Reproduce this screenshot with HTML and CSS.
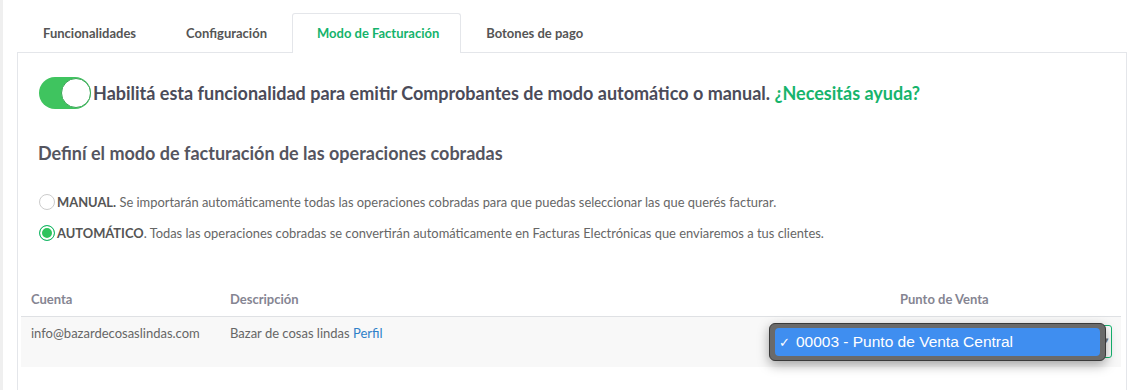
FILE: index.html
```html
<!DOCTYPE html>
<html lang="es">
  <head>
    <meta charset="UTF-8" />
    <meta name="viewport" content="width=device-width, initial-scale=1.0" />
    <title>Modo de Facturación</title>
    <link rel="stylesheet" href="styles.css">
  </head>

  <body>
    <div class="page">
      <ul class="tabs">
        <li class="tab">Funcionalidades</li>
        <li class="tab">Configuración</li>
        <li class="tab active">Modo de Facturación</li>
        <li class="tab">Botones de pago</li>
      </ul>

      <div class="panel">
        <div class="intro">
          <span class="toggle"><span class="knob"></span></span>
          <p class="intro-text">
            Habilitá esta funcionalidad para emitir Comprobantes de modo automático o manual.
            <a class="help" href="#">¿Necesitás ayuda?</a>
          </p>
        </div>

        <h3 class="section-title">Definí el modo de facturación de las operaciones cobradas</h3>

        <div class="options">
          <label class="option">
            <span class="radio"></span>
            <span><b>MANUAL.</b> Se importarán automáticamente todas las operaciones cobradas para que puedas seleccionar las que querés facturar.</span>
          </label>
          <label class="option">
            <span class="radio checked"></span>
            <span><b>AUTOMÁTICO</b>. Todas las operaciones cobradas se convertirán automáticamente en Facturas Electrónicas que enviaremos a tus clientes.</span>
          </label>
        </div>

        <div class="accounts">
          <div class="row head">
            <div class="cell">Cuenta</div>
            <div class="cell">Descripción</div>
            <div class="cell pos-head">Punto de Venta</div>
          </div>
          <div class="row body">
            <div class="cell">info@bazardecosaslindas.com</div>
            <div class="cell">Bazar de cosas lindas <a class="link" href="#">Perfil</a></div>
            <div class="cell">
              <div class="select">
                <span class="caret">▾</span>
                <div class="popup">
                  <div class="popup-item"><span class="check">✓</span>00003 - Punto de Venta Central</div>
                </div>
              </div>
            </div>
          </div>
        </div>
      </div>
    </div>
  </body>
</html>
```

FILE: styles.css
```css
body {
  margin: 0;
  font-family: "Lato", "Open Sans", sans-serif;
  background-color: #fff;
  color: #666;
}

.page {
  border-left: 3px solid #efefef;
  padding: 13px 14px 0 14px;
  min-height: 377px;
}

.tabs {
  list-style: none;
  display: flex;
  margin: 0 0 -1px 1px;
  padding: 0;
}

.tab {
  height: 38px;
  line-height: 39px;
  padding: 0 24px;
  font-size: 13px;
  font-weight: bold;
  color: #555;
  border: 1px solid transparent;
  border-bottom: none;
}

.tab.active {
  color: #14b36b;
  background-color: #fff;
  border-color: #e4e6ea;
  border-radius: 3px 3px 0 0;
  position: relative;
  z-index: 1;
  height: 39px;
  padding-right: 21px;
}

.panel {
  border: 1px solid #e4e6ea;
  border-bottom: none;
  padding: 24px 5px 30px 3px;
}

.intro {
  display: flex;
  align-items: center;
  padding-left: 18px;
}

.toggle {
  display: flex;
  justify-content: flex-end;
  width: 52px;
  height: 32px;
  border-radius: 16px;
  background-color: #3fc45f;
  flex-shrink: 0;
}

.knob {
  width: 30px;
  height: 30px;
  margin-top: 1px;
  border-radius: 50%;
  background-color: #fff;
  box-sizing: border-box;
  border: 1px solid #3aa656;
}

.intro-text {
  margin: 0 0 0 2px;
  font-size: 18px;
  font-weight: bold;
  color: #4b4b59;
}

.help {
  color: #16b46c;
  text-decoration: none;
}

.section-title {
  margin: 33px 0 0 17px;
  font-size: 18px;
  font-weight: bold;
  color: #55555f;
}

.options {
  margin: 29px 0 0 18px;
  display: flex;
  flex-direction: column;
  gap: 13px;
}

.option {
  display: flex;
  align-items: center;
  font-size: 12.9px;
  color: #666;
  height: 18px;
}

.option b {
  color: #555;
}

.radio {
  width: 16px;
  height: 16px;
  box-sizing: border-box;
  border-radius: 50%;
  border: 1px solid #ccc;
  background-color: #fff;
  margin-right: 2px;
}

.radio.checked {
  border: 1px solid #1ab76a;
  background-color: #2ec35c;
  box-shadow: inset 0 0 0 2px #fff;
}

.accounts {
  margin-top: 44px;
}

.row {
  display: grid;
  grid-template-columns: 199px 530px 1fr;
}

.head {
  font-size: 13px;
  font-weight: bold;
  color: #858592;
  height: 30px;
  line-height: 26px;
  border-bottom: 1px solid #dfe1e4;
}

.head .cell {
  padding-left: 10px;
}

.head .pos-head {
  padding-left: 150px;
}

.body {
  background-color: #f8f8f8;
  height: 50px;
  font-size: 13px;
  color: #666;
}

.body .cell {
  padding: 8px 0 0 10px;
}

.link {
  color: #2f80c9;
  text-decoration: none;
}

.select {
  position: relative;
  margin: 0 9px 0 30px;
  height: 31px;
  border: 1px solid #15b570;
  border-radius: 3px;
  background-color: #fff;
}

.caret {
  position: absolute;
  right: 2px;
  top: 8px;
  font-size: 9px;
  color: #777;
}

.popup {
  position: absolute;
  left: -22px;
  right: 5px;
  top: -3px;
  padding: 4px 5px;
  background-color: #6a6a6a;
  border: 1px solid #3a3a3a;
  border-radius: 6px;
  box-shadow: 0 4px 12px rgba(0, 0, 0, 0.35);
}

.popup-item {
  background-color: #3f8ef0;
  border-radius: 4px;
  height: 28px;
  line-height: 28px;
  font-family: "Liberation Sans", Arial, sans-serif;
  font-size: 15.5px;
  color: #fff;
  padding-left: 4px;
}

.check {
  font-family: "DejaVu Sans", sans-serif;
  font-size: 13px;
  margin-right: 6px;
}
```
